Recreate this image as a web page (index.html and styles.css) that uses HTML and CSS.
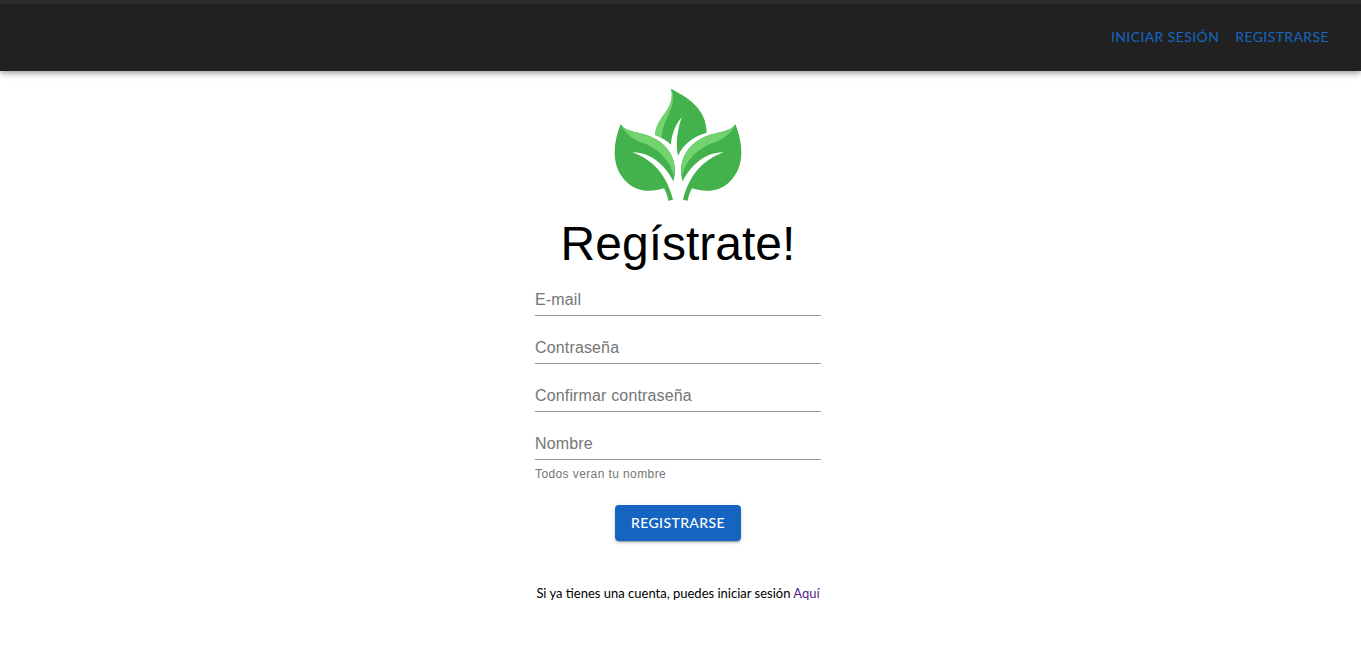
FILE: index.html
```html
<!DOCTYPE html>
<html lang="es">
<head>
<meta charset="utf-8">
<meta name="viewport" content="width=device-width, initial-scale=1">
<title>Regístrate</title>
<link rel="stylesheet" href="styles.css">
</head>
<body>
<header class="topbar">
  <nav class="topbar-nav">
    <a class="nav-link" href="#login">INICIAR SESIÓN</a>
    <a class="nav-link" href="#registro">REGISTRARSE</a>
  </nav>
</header>
<main class="page">
  <svg class="logo" viewBox="27 24 384 342" role="img" aria-label="Hojas verdes">
    <path class="leaf" d="M197 26 C245 50 305 85 305 158 C268 168 236 191 219 227 C211 196 217 150 230 111 C212 133 199 164 198 194 C184 181 168 171 150 165 C153 125 180 105 193 78 C199 64 204 45 197 26Z"/>
    <path class="leaf-light" d="M198 28 C204 45 199 64 193 78 C180 105 153 125 150 165 C157 167 164 170 170 174 C172 115 213 90 202 35Z"/>
    <g id="side-leaf">
      <path class="leaf" d="M47 132 C62 160 116 154 153 178 C200 205 220 255 205 304 C185 262 140 216 82 217 C145 240 185 285 204 359 L190 362 C187 347 183 335 177 325 C138 338 97 335 67 308 C18 264 22 195 47 132Z"/>
      <path class="leaf-light" d="M47 134 C62 160 116 154 153 178 C194 201 215 242 207 287 C190 225 140 196 111 188 C85 178 60 160 47 134Z"/>
    </g>
    <use href="#side-leaf" transform="translate(438 0) scale(-1 1)"/>
  </svg>
  <h1 class="title">Regístrate!</h1>
  <form class="form">
    <div class="field">
      <input class="field-input" id="email" type="email" placeholder=" ">
      <label class="field-label" for="email">E-mail</label>
    </div>
    <div class="field">
      <input class="field-input" id="password" type="password" placeholder=" ">
      <label class="field-label" for="password">Contraseña</label>
    </div>
    <div class="field">
      <input class="field-input" id="confirm" type="password" placeholder=" ">
      <label class="field-label" for="confirm">Confirmar contraseña</label>
    </div>
    <div class="field">
      <input class="field-input" id="name" type="text" placeholder=" " aria-describedby="name-help">
      <label class="field-label" for="name">Nombre</label>
    </div>
    <p class="helper" id="name-help">Todos veran tu nombre</p>
    <button class="submit" type="submit">REGISTRARSE</button>
  </form>
  <p class="signin">Si ya tienes una cuenta, puedes iniciar sesión <a class="signin-link" href="#login">Aquí</a></p>
</main>
</body>
</html>
```
FILE: styles.css
```css
* {
  box-sizing: border-box;
}

body {
  margin: 0;
  background: #fff;
  color: #000;
  font-family: Lato, sans-serif;
  font-size: 14px;
}

.topbar {
  padding: 19px 24px 21px;
  border-top: 4px solid #2d2d2d;
  background: #212121;
  box-shadow: 0 2px 4px -1px rgba(0, 0, 0, 0.2), 0 4px 5px rgba(0, 0, 0, 0.14), 0 1px 10px rgba(0, 0, 0, 0.12);
}

.topbar-nav {
  display: flex;
  justify-content: flex-end;
}

.nav-link {
  padding: 0 8px;
  color: #1565c0;
  line-height: 27px;
  letter-spacing: 0.02857em;
  text-decoration: none;
}

.page {
  display: flex;
  flex-direction: column;
  align-items: center;
  padding: 17px 5px 24px 0;
}

.logo {
  width: 128px;
  height: 114px;
}

.leaf {
  fill: #43b24c;
}

.leaf-light {
  fill: #72d36f;
}

.title {
  margin: 14px 0 12px;
  font-family: "Liberation Sans", Arial, sans-serif;
  font-size: 48px;
  font-weight: 400;
  line-height: 56px;
}

.form {
  display: flex;
  flex-direction: column;
  width: 100%;
  max-width: 286px;
  font-family: "Liberation Sans", Arial, sans-serif;
}

.field {
  display: grid;
  margin-bottom: 16px;
}

.field-input,
.field-label {
  grid-area: 1 / 1;
}

.field-input {
  width: 100%;
  height: 32px;
  padding: 6px 0;
  border: 0;
  border-bottom: 1px solid #949494;
  border-radius: 0;
  background: transparent;
  font: inherit;
  font-size: 16px;
  outline: 0;
}

.field-input:focus {
  border-bottom-color: #1565c0;
}

.field-label {
  color: #757575;
  font-size: 16px;
  line-height: 32px;
  letter-spacing: 0.00938em;
  pointer-events: none;
}

.field-input:not(:placeholder-shown) + .field-label {
  visibility: hidden;
}

.helper {
  margin: -12px 0 21px;
  color: #757575;
  font-size: 12px;
  line-height: 20px;
  letter-spacing: 0.03333em;
}

.submit {
  align-self: center;
  padding: 6px 16px;
  border: 0;
  border-radius: 4px;
  background: #1565c0;
  box-shadow: 0 3px 1px -2px rgba(0, 0, 0, 0.2), 0 2px 2px rgba(0, 0, 0, 0.14), 0 1px 5px rgba(0, 0, 0, 0.12);
  color: #fff;
  font-family: Lato, sans-serif;
  font-size: 14px;
  font-weight: 500;
  line-height: 24px;
  letter-spacing: 0.02857em;
  cursor: pointer;
}

.signin {
  margin: 42px 0 0;
  font-size: 13px;
  line-height: 20px;
}

.signin-link {
  color: #551a8b;
  text-decoration: none;
}
```
